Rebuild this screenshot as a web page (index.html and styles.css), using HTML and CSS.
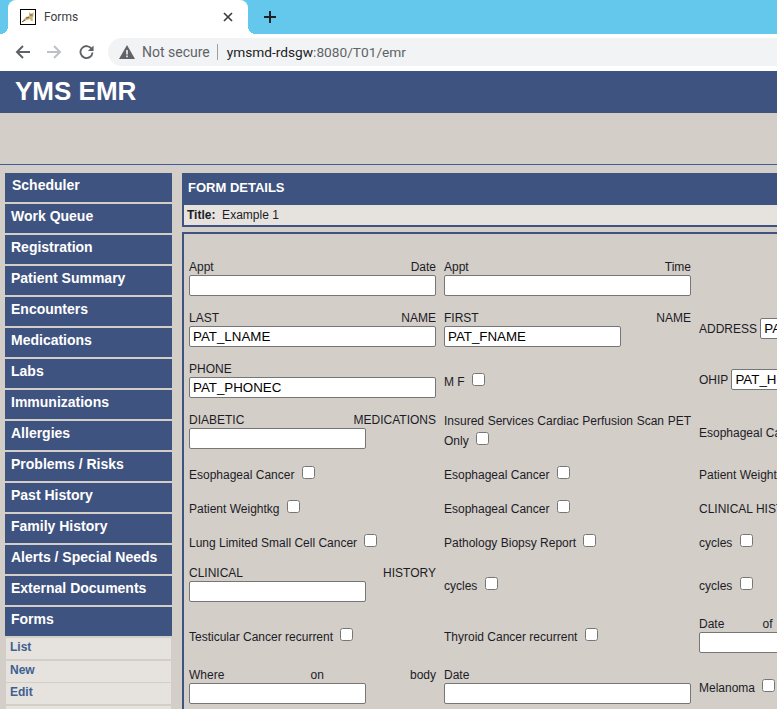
FILE: index.html
```html
<!DOCTYPE html>
<html>
<head>
    <title>Forms</title>
    <link rel="stylesheet" href="styles.css">
</head>
<body>
    <div class="tabstrip">
        <div class="tab">
            <svg class="favicon" width="16" height="16" viewBox="0 0 16 16">
                <rect x="0.5" y="0.5" width="15" height="15" fill="#fff" stroke="#000"/>
                <path d="M2 13 L4 10 L6 8 L9 7 L9 3 L10.5 4.5 L12 4.5 L13.5 3 L13.5 7 L12.5 9 L13 12 L11 12 L10 10 L7 11 L5 12 Z" fill="#cdb27a"/>
                <path d="M2 13 L5 11 M10 6 H12.5 M6 9 L9 8.5" stroke="#6b5a38" fill="none"/>
            </svg>
            <span class="tab-title">Forms</span>
            <svg class="tab-close" width="10" height="10" viewBox="0 0 10 10">
                <path d="M1 1 L9 9 M9 1 L1 9" stroke="#3c4043" stroke-width="1.7" fill="none"/>
            </svg>
        </div>
        <svg class="new-tab" width="12" height="12" viewBox="0 0 12 12">
            <path d="M6 0 V12 M0 6 H12" stroke="#202124" stroke-width="2" fill="none"/>
        </svg>
    </div>
    <div class="toolbar">
        <svg class="nav-icon" width="15" height="16" viewBox="0 0 15 16">
            <path d="M15 8 H2 M8 2 L2 8 L8 14" stroke="#5f6368" stroke-width="2" fill="none"/>
        </svg>
        <svg class="nav-icon" width="15" height="16" viewBox="0 0 15 16">
            <path d="M0 8 H13 M7 2 L13 8 L7 14" stroke="#bdc1c6" stroke-width="2" fill="none"/>
        </svg>
        <svg class="nav-icon" width="15" height="16" viewBox="0 0 16 16">
            <path d="M13.4 4.6 A6.4 6.4 0 1 0 14.4 8.5" stroke="#5f6368" stroke-width="2" fill="none"/>
            <path d="M15.5 1 V7 H9.5 Z" fill="#5f6368"/>
        </svg>
        <div class="omnibox">
            <svg width="16" height="14" viewBox="0 0 16 14">
                <path d="M8 0 L16 14 H0 Z" fill="#5f6368"/>
                <path d="M8 5 V9.5 M8 10.5 V12.2" stroke="#f1f3f4" stroke-width="1.6" fill="none"/>
            </svg>
            <span class="not-secure">Not secure</span>
            <span class="url"><span class="host">ymsmd-rdsgw</span>:8080/T01/emr</span>
        </div>
    </div>

    <div class="page">
        <div class="app-title">YMS EMR</div>
        <div class="banner"></div>
        <div class="content">
            <div class="sidebar">
                <a class="nav first">Scheduler</a>
                <a class="nav">Work Queue</a>
                <a class="nav">Registration</a>
                <a class="nav">Patient Summary</a>
                <a class="nav">Encounters</a>
                <a class="nav">Medications</a>
                <a class="nav">Labs</a>
                <a class="nav">Immunizations</a>
                <a class="nav">Allergies</a>
                <a class="nav">Problems / Risks</a>
                <a class="nav">Past History</a>
                <a class="nav">Family History</a>
                <a class="nav">Alerts / Special Needs</a>
                <a class="nav">External Documents</a>
                <a class="nav">Forms</a>
                <a class="sub">List</a>
                <a class="sub">New</a>
                <a class="sub">Edit</a>
                <a class="sub"></a>
            </div>
            <div class="main">
                <div class="main-head">FORM DETAILS</div>
                <div class="title-bar"><b>Title:</b>&nbsp; Example 1</div>
                <div class="form-box">
                    <label class="cell">Appt Date <input type="text" class="wide"></label>
                    <label class="cell">Appt Time <input type="text" class="wide"></label>
                    <div class="cell"></div>

                    <label class="cell">LAST NAME <input type="text" class="wide" value="PAT_LNAME"></label>
                    <label class="cell">FIRST NAME <input type="text" class="std" value="PAT_FNAME"></label>
                    <label class="cell inline">ADDRESS <input type="text" class="std" value="PAT_ADDRESS"></label>

                    <label class="cell">PHONE <input type="text" class="wide" value="PAT_PHONEC"></label>
                    <label class="cell">M F <input type="checkbox"></label>
                    <label class="cell inline">OHIP <input type="text" class="std" value="PAT_HCN"></label>

                    <label class="cell">DIABETIC MEDICATIONS <input type="text" class="std"></label>
                    <label class="cell">Insured Services Cardiac Perfusion Scan PET Only <input type="checkbox"></label>
                    <label class="cell">Esophageal Cancer <input type="checkbox"></label>

                    <label class="cell">Esophageal Cancer <input type="checkbox"></label>
                    <label class="cell">Esophageal Cancer <input type="checkbox"></label>
                    <label class="cell">Patient Weightkg <input type="checkbox"></label>

                    <label class="cell">Patient Weightkg <input type="checkbox"></label>
                    <label class="cell">Esophageal Cancer <input type="checkbox"></label>
                    <label class="cell">CLINICAL HISTORY <input type="checkbox"></label>

                    <label class="cell">Lung Limited Small Cell Cancer <input type="checkbox"></label>
                    <label class="cell">Pathology Biopsy Report <input type="checkbox"></label>
                    <label class="cell">cycles <input type="checkbox"></label>

                    <label class="cell">CLINICAL HISTORY <input type="text" class="std"></label>
                    <label class="cell">cycles <input type="checkbox"></label>
                    <label class="cell">cycles <input type="checkbox"></label>

                    <label class="cell">Testicular Cancer recurrent <input type="checkbox"></label>
                    <label class="cell">Thyroid Cancer recurrent <input type="checkbox"></label>
                    <label class="cell">Date of Thyroid recurrence <input type="text" class="std"></label>

                    <label class="cell">Where on body <input type="text" class="std"></label>
                    <label class="cell">Date <input type="text" class="wide"></label>
                    <label class="cell">Melanoma <input type="checkbox"></label>
                </div>
            </div>
        </div>
    </div>
</body>
</html>
```

FILE: styles.css
```css
html, body {
    margin: 0;
    height: 709px;
    overflow: hidden;
    background: #d3cec7;
}

/* browser top */
.tabstrip {
    display: flex;
    align-items: center;
    height: 34px;
    padding-left: 8px;
    background: #63c8ec;
}
.tab {
    position: relative;
    display: flex;
    align-items: center;
    box-sizing: border-box;
    width: 240px;
    height: 34px;
    padding: 0 15px 0 12px;
    background: #fff;
    border-radius: 8px 8px 0 0;
}
.tab::before, .tab::after {
    content: "";
    position: absolute;
    bottom: 0;
    width: 8px;
    height: 8px;
}
.tab::before {
    left: -8px;
    background: radial-gradient(circle at 0 0, transparent 8px, #fff 8px);
}
.tab::after {
    right: -8px;
    background: radial-gradient(circle at 100% 0, transparent 8px, #fff 8px);
}
.tab-title {
    flex: 1;
    margin-left: 8px;
    font: 12px Roboto, sans-serif;
    color: #3c4043;
}
.new-tab {
    margin-left: 16px;
}
.toolbar {
    display: flex;
    align-items: center;
    height: 35px;
    padding: 0 0 2px 15px;
    background: #fff;
    overflow: hidden;
}
.nav-icon {
    margin-right: 17px;
    flex: none;
}
.omnibox {
    display: flex;
    align-items: center;
    flex: none;
    box-sizing: border-box;
    width: 720px;
    height: 28px;
    margin-left: -3px;
    padding-left: 11px;
    border-radius: 14px;
    background: #f1f3f4;
    font: 14px Roboto, sans-serif;
}
.not-secure {
    margin-left: 7px;
    padding-right: 7px;
    border-right: 1px solid #9aa0a6;
    color: #5f6368;
}
.url {
    margin-left: 9px;
    color: #5f6368;
    font-size: 13.7px;
}
.host {
    color: #202124;
}

/* page */
.page {
    font: 12px "Liberation Sans", Arial, sans-serif;
    color: #1c1c28;
}
.app-title {
    height: 42px;
    padding-left: 15px;
    background: #3f5380;
    color: #fff;
    font-size: 26px;
    font-weight: bold;
    line-height: 41px;
}
.banner {
    height: 51px;
    border-bottom: 1px solid #3f5ca0;
}
.content {
    display: flex;
    padding: 8px 0 0 5px;
}
.sidebar {
    flex: none;
    width: 167px;
    margin-right: 10px;
}
.nav {
    display: block;
    box-sizing: border-box;
    height: 29px;
    margin-bottom: 2px;
    padding: 4px 0 0 6px;
    background: #3f5380;
    color: #fff;
    font-size: 14px;
    font-weight: bold;
    line-height: 16px;
}
.first {
    padding-left: 7px;
}
.sub {
    display: block;
    box-sizing: border-box;
    height: 21px;
    margin: 0 1px 1.5px;
    padding: 2px 0 0 4px;
    background: #e6e3de;
    color: #3f6090;
    font-weight: bold;
    line-height: 14px;
}
.main {
    flex: none;
    width: 800px;
}
.main-head {
    height: 32px;
    padding-left: 6px;
    background: #3f5380;
    color: #fff;
    font-size: 13px;
    font-weight: bold;
    line-height: 29px;
}
.title-bar {
    height: 20px;
    padding-left: 3px;
    border-left: 2px solid #3f5380;
    border-bottom: 2px solid #3f5380;
    background: #e6e3de;
    line-height: 20px;
}
.form-box {
    display: grid;
    grid-template-columns: 247px 247px 247px;
    column-gap: 8px;
    row-gap: 14px;
    align-items: center;
    margin-top: 5px;
    padding: 25px 0 30px 5px;
    border: 2px solid #3f5380;
    border-right: none;
    border-bottom: none;
}
.cell {
    display: block;
    text-align: justify;
    line-height: 16px;
}
.cell input[type=text] {
    box-sizing: border-box;
    height: 21px;
    margin: 0;
    padding: 1px 3px;
    border: 1px solid #767676;
    border-radius: 2px;
    background: #fff;
    color: #000;
    font: 13.33px "Liberation Sans", Arial, sans-serif;
    vertical-align: top;
}
.cell.inline input[type=text] {
    vertical-align: baseline;
}
.cell input[type=checkbox] {
    margin: 3px 3px 3px 4px;
}
.wide {
    width: 247px;
}
.std {
    width: 177px;
}
```
